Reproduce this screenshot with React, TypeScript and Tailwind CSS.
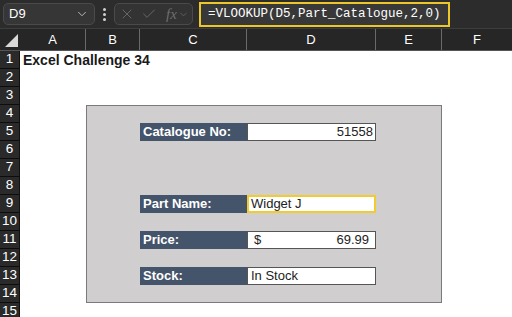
import { Check, ChevronDown, X } from "lucide-react";

const cols = ["A", "B", "C", "D", "E", "F"];
const colWidths = ["w-[66px]", "w-[54px]", "w-[107px]", "w-[129px]", "w-[66px]", "w-[70px]"];
const rows = Array.from({ length: 15 }, (_, i) => i + 1);

const fields = [
  { row: "row-start-5", label: "Catalogue No:", value: "51558", align: "right" },
  { row: "row-start-9", label: "Part Name:", value: "Widget J", align: "left", selected: true },
  { row: "row-start-11", label: "Price:", value: "69.99", align: "price" },
  { row: "row-start-13", label: "Stock:", value: "In Stock", align: "left" },
];

export default function App() {
  return (
    <div className="w-[512px] h-[317px] overflow-hidden bg-white font-['Liberation_Sans',Arial,sans-serif]">
      {/* formula bar */}
      <div className="h-[29px] bg-[#2c2c2c] flex items-center border-b border-[#3d3d3d]">
        <div className="ml-[3px] w-[92px] h-[22px] rounded-[5px] border border-[#4a4a4a] bg-[#363636] flex items-center justify-between px-[5px]">
          <span className="text-[13px] text-white">D9</span>
          <ChevronDown className="w-[14px] h-[14px] text-[#c8c8c8]" strokeWidth={1.5} />
        </div>
        <div className="w-[19px] flex flex-col items-center gap-[2px]">
          <span className="w-[3px] h-[3px] rounded-full bg-[#d0d0d0]" />
          <span className="w-[3px] h-[3px] rounded-full bg-[#d0d0d0]" />
          <span className="w-[3px] h-[3px] rounded-full bg-[#d0d0d0]" />
        </div>
        <div className="w-[79px] h-[22px] rounded-[5px] border border-[#4a4a4a] bg-[#333333] flex items-center pl-[4px] text-[#6e6e6e]">
          <X className="w-[16px] h-[16px]" strokeWidth={1.3} />
          <Check className="w-[16px] h-[16px] ml-[6px]" strokeWidth={1.3} />
          <span className="ml-[9px] text-[15px] italic font-['Liberation_Serif',serif] leading-none">fx</span>
          <ChevronDown className="w-[11px] h-[11px] ml-[1px]" strokeWidth={1.5} />
        </div>
        <div className="ml-[6px] w-[251px] h-[25px] border-2 border-[#ecc729] bg-[#383838] flex items-center pl-[7px]">
          <span className="text-[12.5px] text-white font-['Liberation_Mono',monospace]">=VLOOKUP(D5,Part_Catalogue,2,0)</span>
        </div>
      </div>

      {/* column headers */}
      <div className="h-[22px] flex bg-[#262626] border-b border-[#555]">
        <div className="w-[20px] relative">
          <div className="absolute right-[2px] bottom-[3px] w-0 h-0 border-l-[13px] border-l-transparent border-b-[13px] border-b-[#d9d9d9]" />
        </div>
        {cols.map((c, i) => (
          <div
            key={c}
            className={`${colWidths[i]} flex items-center justify-center text-[13px] text-white border-r border-[#6a6a6a] last:border-r-0`}
          >
            {c}
          </div>
        ))}
      </div>

      {/* sheet */}
      <div className="flex">
        <div className="w-[20px] bg-[#2a2a2a] border-r border-[#111]">
          {rows.map((r) => (
            <div
              key={r}
              className="h-[18px] flex items-center justify-center text-[13.5px] text-white border-b border-[#0d0d0d]"
            >
              {r}
            </div>
          ))}
        </div>

        <div className="grid grid-cols-[66px_54px_107px_129px_66px_70px] grid-rows-[repeat(15,18px)]">
          <div className="col-start-1 col-span-3 row-start-1 flex items-center pl-[3px] text-[14px] font-bold text-[#1a1a1a] whitespace-nowrap">
            Excel Challenge 34
          </div>

          {/* panel */}
          <div className="col-start-2 col-end-6 row-start-4 row-end-15 bg-[#d0cece] border border-[#7a7a7a]" />

          {fields.map((f) => (
            <div key={f.label} className="contents">
              <div className={`col-start-3 ${f.row} bg-[#44546a] text-white font-bold text-[13px] flex items-center pl-[3px]`}>
                {f.label}
              </div>
              <div
                className={`col-start-4 ${f.row} bg-white flex items-center text-[13px] text-[#222] ${
                  f.selected ? "border-2 border-[#f2cb2f] pl-[2px]" : "border border-[#555] pl-[3px]"
                } ${f.align === "right" ? "justify-end pr-[2px]" : ""} ${f.align === "price" ? "justify-between pr-[6px] pl-[6px]" : ""}`}
              >
                {f.align === "price" ? (
                  <>
                    <span>$</span>
                    <span>{f.value}</span>
                  </>
                ) : (
                  <span>{f.value}</span>
                )}
              </div>
            </div>
          ))}
        </div>
      </div>
    </div>
  );
}
